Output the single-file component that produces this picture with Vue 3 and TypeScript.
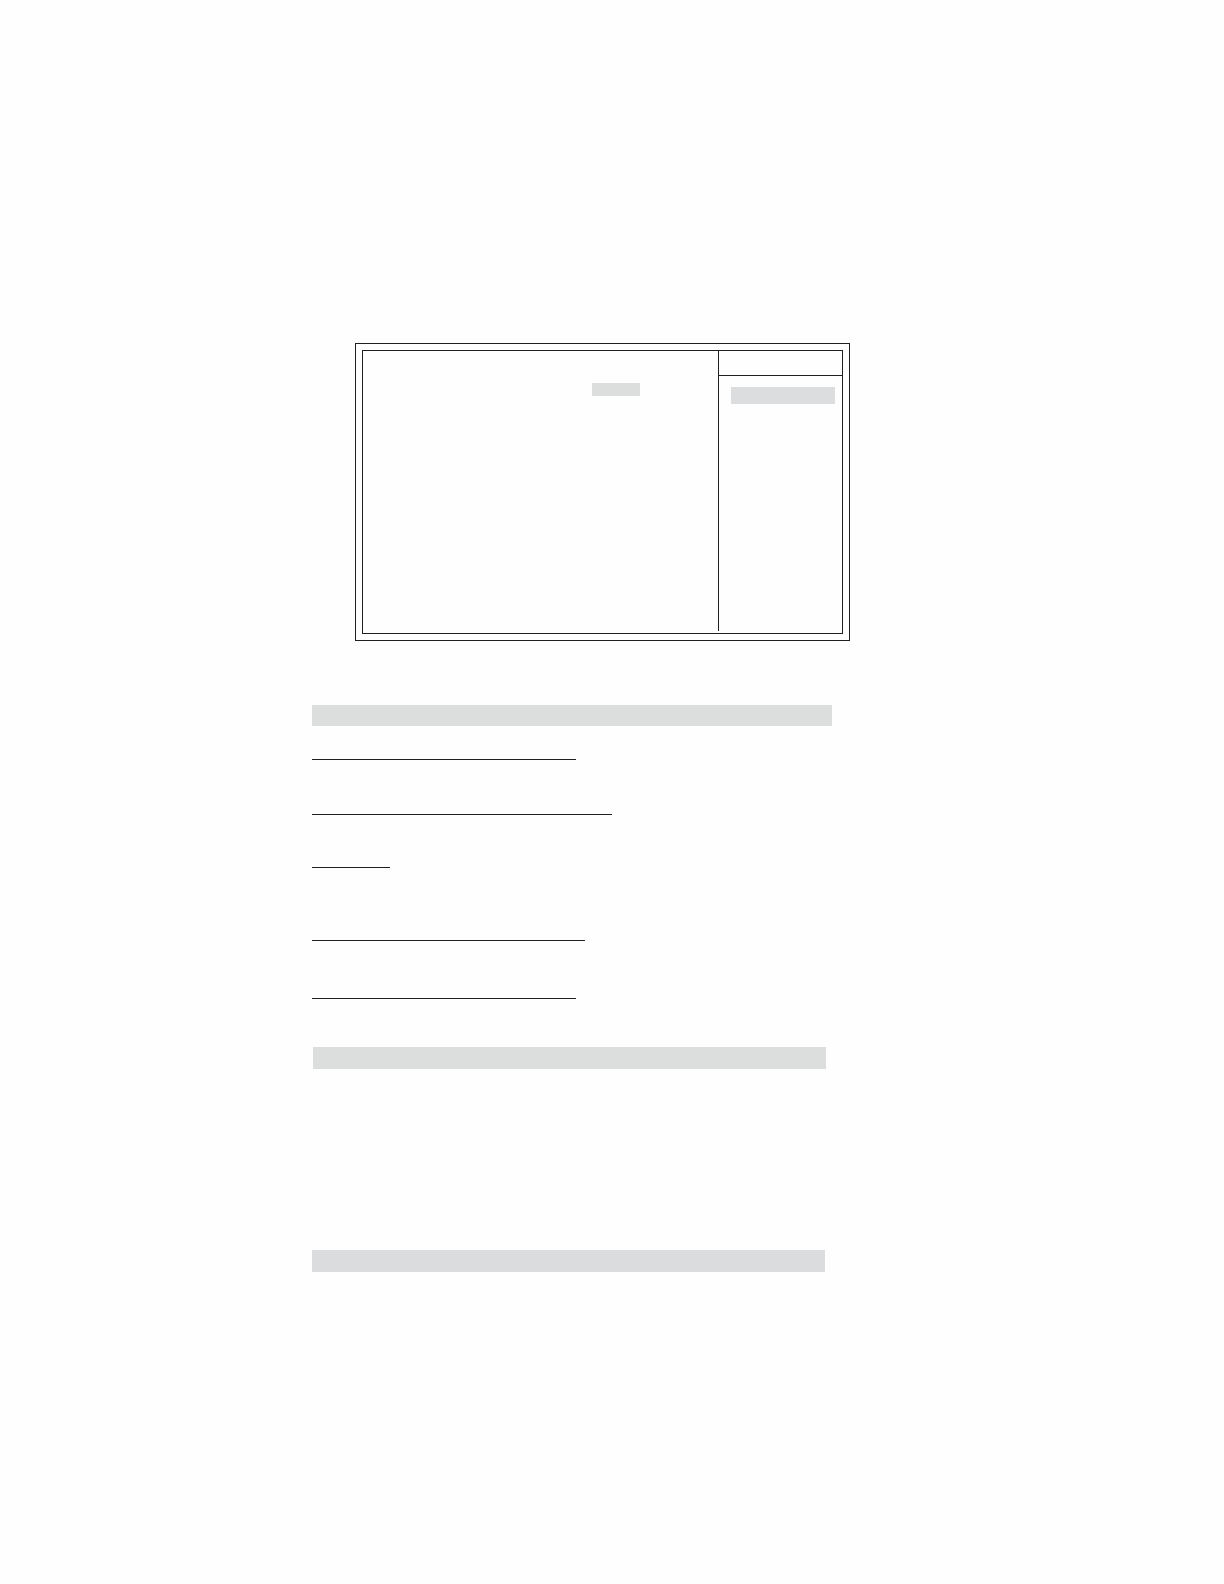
<script setup lang="ts">
interface Rule {
  width: number
  space: number
}

// Underlines of the empty headings: length and the space above each one
const rules: Rule[] = [
  { width: 264, space: 33 },
  { width: 300, space: 54 },
  { width: 78, space: 52 },
  { width: 273, space: 72 },
  { width: 264, space: 57 },
]
</script>

<template>
  <main class="page">
    <section class="screen">
      <div class="frame">
        <div class="settings">
          <div class="value"></div>
        </div>
        <aside class="help">
          <div class="help-head"></div>
          <div class="help-item"></div>
        </aside>
      </div>
    </section>

    <div class="band band-first"></div>
    <div
      v-for="(rule, i) in rules"
      :key="i"
      class="rule"
      :style="{ width: rule.width + 'px', marginTop: rule.space + 'px' }"
    ></div>
    <div class="band band-second"></div>
    <div class="band band-third"></div>
  </main>
</template>

<style>
body {
  margin: 0;
  background: #fefefe;
}
</style>

<style scoped>
.page {
  box-sizing: border-box;
  max-width: 850px;
  min-height: 100vh;
  padding: 343px 0 96px 312px;
  font-family: "Liberation Sans", Arial, sans-serif;
}

.screen {
  box-sizing: border-box;
  margin-left: 43px;
  padding: 6px;
  border: 1px solid #231f20;
}

.frame {
  display: flex;
  min-height: 282px;
  border: 1px solid #231f20;
}

.settings {
  display: flex;
  flex: 1;
  justify-content: flex-end;
  padding: 32px 78px 0 0;
}

.value {
  width: 48px;
  height: 13px;
  background: #dcdddd;
}

.help {
  box-sizing: border-box;
  width: 124px;
  margin-bottom: 2px;
  border-left: 1px solid #231f20;
}

.help-head {
  height: 24px;
  border-bottom: 1px solid #231f20;
}

.help-item {
  height: 17px;
  margin: 11px 7px 0 12px;
  background: #dcddde;
}

.band {
  height: 22px;
  background: #dcdddd;
}

.band-first {
  height: 21px;
  margin: 64px 18px 0 0;
}

.band-second {
  margin: 48px 24px 0 1px;
}

.band-third {
  margin: 181px 25px 0 0;
  background: #dadcdd;
}

.rule {
  height: 1px;
  background: #231f20;
}
</style>
